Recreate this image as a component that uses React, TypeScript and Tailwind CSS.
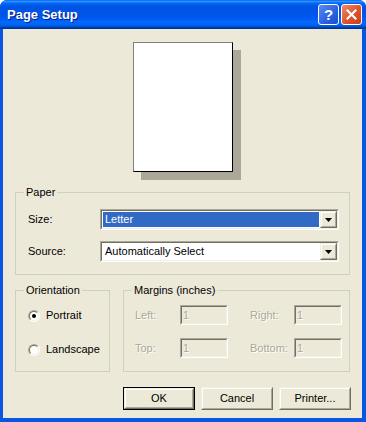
import React from 'react';

const sunkenOuter = 'border border-t-[#ACA899] border-l-[#ACA899] border-b-white border-r-white';
const sunkenInner = 'border border-t-[#716F64] border-l-[#716F64] border-b-[#F1EFE2] border-r-[#F1EFE2]';
const raisedOuter = 'border border-t-[#F1EFE2] border-l-[#F1EFE2] border-b-[#716F64] border-r-[#716F64]';
const raisedInner = 'border border-t-white border-l-white border-b-[#ACA899] border-r-[#ACA899]';
const disabled = 'text-[#ACA899] [text-shadow:1px_1px_0_#fff]';

function GroupBox({ label, className, children }: { label: string; className: string; children?: React.ReactNode }) {
  return (
    <div className={`relative border border-[#D0D0BF] ${className}`}>
      <span className="absolute left-[8px] top-[-8px] bg-[#ECE9D8] px-[2px] leading-[14px]">{label}</span>
      {children}
    </div>
  );
}

function Combo({ value, selected }: { value: string; selected?: boolean }) {
  return (
    <div className={`h-[21px] w-[239px] ${sunkenOuter}`}>
      <div className={`flex h-full ${sunkenInner}`}>
        <div className="flex-1 bg-white p-[1px]">
          <div className={`flex h-full items-center px-[2px] ${selected ? 'bg-[#316AC5] text-white' : ''}`}>{value}</div>
        </div>
        <div className={`h-full w-[17px] ${raisedOuter}`}>
          <div className={`flex h-full items-center justify-center bg-[#ECE9D8] ${raisedInner}`}>
            <svg width="7" height="4" viewBox="0 0 7 4">
              <path d="M0 0h7L3.5 4z" fill="#000" />
            </svg>
          </div>
        </div>
      </div>
    </div>
  );
}

function Radio({ label, checked }: { label: string; checked?: boolean }) {
  return (
    <div className="flex items-center gap-[6px] leading-[13px]">
      <div className="h-[12px] w-[12px] rounded-full border border-t-[#ACA899] border-l-[#ACA899] border-b-white border-r-white">
        <div className="flex h-full w-full items-center justify-center rounded-full border border-t-[#716F64] border-l-[#716F64] border-b-[#F1EFE2] border-r-[#F1EFE2] bg-white">
          {checked && <div className="h-[4px] w-[4px] rounded-full bg-black" />}
        </div>
      </div>
      <span>{label}</span>
    </div>
  );
}

function MarginField() {
  return (
    <div className={`h-[20px] w-[48px] ${sunkenOuter}`}>
      <div className={`flex h-full items-center px-[1px] ${sunkenInner} ${disabled}`}>1</div>
    </div>
  );
}

function Button({ label, isDefault }: { label: string; isDefault?: boolean }) {
  return (
    <div className={`h-[23px] w-[72px] ${isDefault ? 'border border-black' : ''}`}>
      <div className={`h-full ${raisedOuter}`}>
        <div className={`flex h-full items-center justify-center ${raisedInner}`}>{label}</div>
      </div>
    </div>
  );
}

export default function App() {
  return (
    <div className="h-[422px] w-[366px] bg-white font-['Liberation_Sans',Arial,sans-serif] text-[11px] text-black">
      <div className="flex h-full flex-col overflow-hidden rounded-t-[7px] bg-[#0A56E4]">
        <div className="flex h-[29px] shrink-0 items-center bg-[linear-gradient(#0058EE_0%,#3593FF_4%,#288EFF_6%,#127DFF_8%,#036FFC_10%,#0262EE_14%,#0057E5_20%,#0054E3_24%,#0055EB_56%,#005BF5_66%,#026AFE_76%,#0062EF_86%,#0052D6_92%,#0040AB_94%,#003092_100%)] pl-[7px] pr-[4px]">
          <span className="flex-1 pt-[1px] text-[13px] font-bold text-white [text-shadow:1px_1px_0_#0A1883]">Page Setup</span>
          <div className="flex gap-[2px]">
            <div className="flex h-[21px] w-[21px] items-center justify-center rounded-[3px] border border-white bg-[linear-gradient(135deg,#5A8CF5,#2A5FE0_60%,#1A4FD0)] text-[15px] font-bold leading-none text-white">
              ?
            </div>
            <div className="flex h-[21px] w-[21px] items-center justify-center rounded-[3px] border border-white bg-[linear-gradient(135deg,#F08A6A,#E0502A_55%,#C8401C)]">
              <svg width="11" height="11" viewBox="0 0 11 11">
                <path d="M1.5 1.5l8 8M9.5 1.5l-8 8" stroke="#fff" strokeWidth="2.2" strokeLinecap="square" />
              </svg>
            </div>
          </div>
        </div>
        <div className="flex flex-1 flex-col pb-[4px] pl-[3px] pr-[4px]">
          <div className="flex flex-1 flex-col bg-[#ECE9D8]">
            <div className="mx-auto mt-[13px] h-[130px] w-[100px] shrink-0 border border-b-black border-r-black border-t-[#808080] border-l-[#808080] bg-white shadow-[8px_8px_0_#ACA899]" />

            <GroupBox label="Paper" className="mx-[12px] mt-[20px] h-[83px] shrink-0">
              <div className="flex flex-col gap-[11px] pl-[12px] pt-[16px]">
                <div className="flex items-center">
                  <span className="w-[72px]">Size:</span>
                  <Combo value="Letter" selected />
                </div>
                <div className="flex items-center">
                  <span className="w-[72px]">Source:</span>
                  <Combo value="Automatically Select" />
                </div>
              </div>
            </GroupBox>

            <div className="mx-[12px] mt-[15px] flex h-[82px] shrink-0 gap-[13px]">
              <GroupBox label="Orientation" className="h-full w-[95px]">
                <div className="flex flex-col gap-[21px] pl-[12px] pt-[18px]">
                  <Radio label="Portrait" checked />
                  <Radio label="Landscape" />
                </div>
              </GroupBox>
              <GroupBox label="Margins (inches)" className="h-full flex-1">
                <div className="grid grid-cols-[45px_48px_22px_44px_48px] items-center gap-y-[13px] pl-[11px] pt-[14px]">
                  <span className={disabled}>Left:</span>
                  <MarginField />
                  <span />
                  <span className={disabled}>Right:</span>
                  <MarginField />
                  <span className={disabled}>Top:</span>
                  <MarginField />
                  <span />
                  <span className={disabled}>Bottom:</span>
                  <MarginField />
                </div>
              </GroupBox>
            </div>

            <div className="mr-[11px] mt-[15px] flex justify-end gap-[6px]">
              <Button label="OK" isDefault />
              <Button label="Cancel" />
              <Button label="Printer..." />
            </div>
          </div>
        </div>
      </div>
    </div>
  );
}
